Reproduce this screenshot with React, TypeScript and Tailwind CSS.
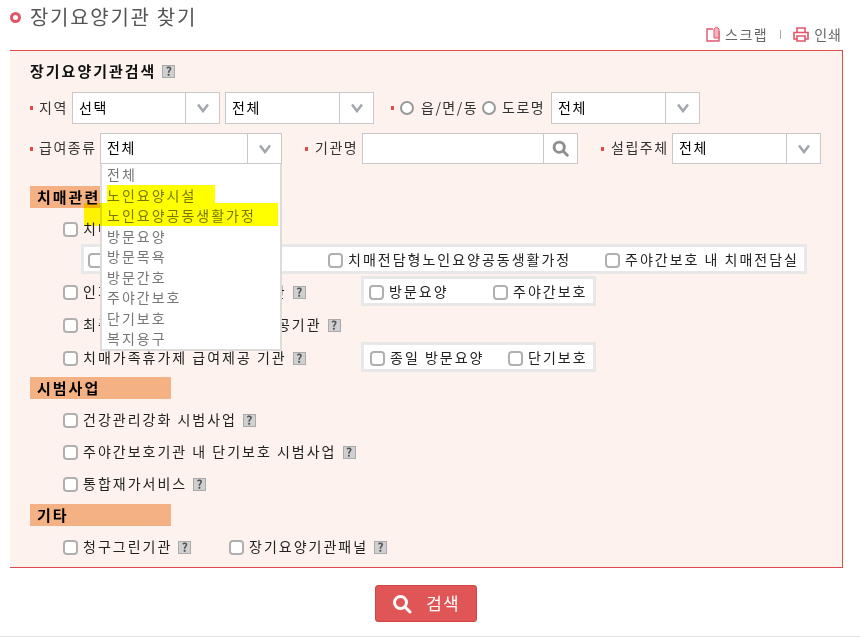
const font = { fontFamily: '"Noto Sans CJK KR", "Liberation Sans", sans-serif' };

function Help() {
  return (
    <span className="inline-flex items-center justify-center w-[13px] h-[13px] ml-[6px] shrink-0 bg-[#d0d0d0] border border-[#aaa] text-[#555] text-[12px] font-bold leading-none tracking-normal">
      ?
    </span>
  );
}

function Chevron() {
  return (
    <svg width="12" height="10" viewBox="0 0 12 10">
      <path d="M1 1.5 L6 8 L11 1.5" fill="none" stroke="#a3a6ad" strokeWidth="2.6" />
    </svg>
  );
}

function SearchIcon({ color, size, width }: { color: string; size: number; width: number }) {
  return (
    <svg width={size} height={size} viewBox="0 0 20 20">
      <circle cx="8.5" cy="8.5" r="6" fill="none" stroke={color} strokeWidth={width} />
      <path d="M13 13 L18 18" stroke={color} strokeWidth={width} strokeLinecap="round" />
    </svg>
  );
}

function Select({ w, h = "h-[32px]", label = "전체", btn = "w-[34px]" }: { w: string; h?: string; label?: string; btn?: string }) {
  return (
    <div className={`flex items-center shrink-0 bg-white border border-[#c8c8c8] ${w} ${h}`}>
      <span className="flex-1 pl-[6px] pb-[2px] text-[14px] text-black">{label}</span>
      <span className={`flex items-center justify-center h-full border-l border-[#c8c8c8] ${btn}`}>
        <Chevron />
      </span>
    </div>
  );
}

function Dot() {
  return <span className="inline-block w-[3px] h-[4px] bg-[#e04a4a] mr-[6px] shrink-0" />;
}

function Check({ label, help, className = "" }: { label: string; help?: boolean; className?: string }) {
  return (
    <label className={`flex items-center mt-[2px] whitespace-nowrap text-[14px] text-[#222] ${className}`}>
      <input
        type="checkbox"
        className="appearance-none w-[15px] h-[15px] mr-[5px] shrink-0 bg-white border-2 border-[#b0b0b0] rounded-[4px]"
      />
      <span className="pb-[2px]">{label}</span>
      {help && <Help />}
    </label>
  );
}

function Section({ title, className = "" }: { title: string; className?: string }) {
  return (
    <div className={`flex items-center w-[141px] h-[22px] pl-[7px] bg-[#f4b183] text-[15px] font-bold tracking-[2px] text-black ${className}`}>
      {title}
    </div>
  );
}

function SubBox({ children, className }: { children: React.ReactNode; className: string }) {
  return <div className={`flex items-center bg-white border-[3px] border-[#e8e8e8] ${className}`}>{children}</div>;
}

const serviceOptions = ["방문요양", "방문목욕", "방문간호", "주야간보호", "단기보호", "복지용구"];

export default function App() {
  return (
    <div className="w-[860px] h-[637px] overflow-hidden bg-white tracking-[2px]" style={font}>
      <div className="flex items-start justify-between h-[50px] pl-[10px] pr-[18px]">
        <div className="flex items-center mt-[3px]">
          <span className="w-[11px] h-[11px] rounded-full border-[3px] border-[#e2566a] bg-white" />
          <h1 className="ml-[9px] text-[20px] leading-[28px] tracking-[1.7px] text-[#555]">장기요양기관 찾기</h1>
        </div>
        <div className="flex items-center mt-[24px] text-[14px] leading-[20px] text-[#666] tracking-[1.5px]">
          <svg width="15" height="16" viewBox="0 0 15 16" className="mr-[4px]">
            <path d="M7 3 H1 V15 H13 V5" fill="none" stroke="#e2566a" strokeWidth="1.4" />
            <path d="M8 12 V3 Q10.5 -0.5 13 3 V12 Z" fill="#f3b4bd" stroke="#e2566a" />
          </svg>
          <span>스크랩</span>
          <span className="mx-[12px] w-px h-[9px] bg-[#aaa]" />
          <svg width="16" height="15" viewBox="0 0 16 15" className="mr-[5px]">
            <path d="M4 5 V1 H12 V5 M4 12 H1 V5.5 H15 V12 H12" fill="none" stroke="#e2566a" strokeWidth="1.6" />
            <path d="M4 9 H12 V14 H4 Z" fill="none" stroke="#e2566a" strokeWidth="1.6" />
          </svg>
          <span className="tracking-[1px]">인쇄</span>
        </div>
      </div>

      <div className="relative w-[833px] h-[518px] ml-[10px] px-[20px] bg-[#fdf2ee] border-t border-b border-r border-[#e04a4a]">
        <div className="flex items-center h-[20px] mt-[10px] text-[15px] font-bold tracking-[2px] text-[#111]">
          장기요양기관검색
          <Help />
        </div>

        <div className="flex items-center mt-[11px] text-[14px] text-[#333] tracking-[1.5px] whitespace-nowrap">
          <Dot />
          <span className="w-[33px] pb-[2px]">지역</span>
          <Select w="w-[148px]" label="선택" />
          <div className="w-[5px]" />
          <Select w="w-[149px]" />
          <div className="w-[17px]" />
          <Dot />
          <span className="w-[14px] h-[14px] rounded-full bg-white border-2 border-[#999]" />
          <span className="ml-[7px] w-[55px] pb-[2px]">읍/면/동</span>
          <span className="ml-[6px] w-[14px] h-[14px] rounded-full bg-white border-2 border-[#999]" />
          <span className="ml-[6px] w-[42px] pb-[2px]">도로명</span>
          <div className="w-[7px]" />
          <Select w="w-[149px]" />
        </div>

        <div className="flex items-center mt-[9px] text-[14px] text-[#333] tracking-[1.5px] whitespace-nowrap">
          <Dot />
          <span className="w-[61px] pb-[2px]">급여종류</span>
          <Select w="w-[182px]" h="h-[31px]" />
          <div className="w-[23px]" />
          <Dot />
          <span className="w-[48px] pl-[1px] pb-[2px]">기관명</span>
          <div className="flex items-center justify-end w-[216px] h-[31px] bg-white border border-[#c8c8c8]">
            <span className="flex items-center justify-center w-[34px] h-full border-l border-[#c8c8c8]">
              <SearchIcon color="#8f8f8f" size={17} width={3.4} />
            </span>
          </div>
          <div className="w-[23px]" />
          <Dot />
          <span className="w-[62px] pl-[1px] pb-[2px]">설립주체</span>
          <Select w="w-[149px]" h="h-[31px]" />
        </div>

        <Section title="치매관련" className="mt-[22px]" />
        <div className="flex items-center h-[32px] mt-[4px] pl-[33px]">
          <Check label="치매전담형 장기요양기관" />
        </div>
        <SubBox className="w-[726px] h-[30px] ml-[51px] pl-[4px]">
          <Check label="치매전담형노인요양시설" className="w-[240px]" />
          <Check label="치매전담형노인요양공동생활가정" className="w-[277px]" />
          <Check label="주야간보호 내 치매전담실" />
        </SubBox>
        <div className="flex items-center h-[30px] mt-[2px] pl-[33px]">
          <Check label="인지활동형 프로그램 제공기관" help className="w-[298px]" />
          <SubBox className="w-[235px] h-[30px] pl-[5px]">
            <Check label="방문요양" className="w-[124px]" />
            <Check label="주야간보호" />
          </SubBox>
        </div>
        <div className="flex items-center h-[32px] mt-[2px] pl-[33px]">
          <Check label="최중증 수급자 프로그램형 제공기관" help />
        </div>
        <div className="flex items-center h-[30px] mt-[2px] pl-[33px]">
          <Check label="치매가족휴가제 급여제공 기관" help className="w-[298px]" />
          <SubBox className="w-[235px] h-[30px] pl-[6px]">
            <Check label="종일 방문요양" className="w-[138px]" />
            <Check label="단기보호" />
          </SubBox>
        </div>

        <Section title="시범사업" className="mt-[5px]" />
        <div className="flex items-center h-[32px] mt-[4px] pl-[33px]">
          <Check label="건강관리강화 시범사업" help />
        </div>
        <div className="flex items-center h-[32px] pl-[33px]">
          <Check label="주야간보호기관 내 단기보호 시범사업" help />
        </div>
        <div className="flex items-center h-[32px] pl-[33px]">
          <Check label="통합재가서비스" help />
        </div>

        <Section title="기타" className="mt-[5px]" />
        <div className="flex items-center h-[32px] mt-[4px] pl-[33px]">
          <Check label="청구그린기관" help className="w-[166px]" />
          <Check label="장기요양기관패널" help />
        </div>

        {/* open select list */}
        <div className="absolute left-[90px] top-[113px] w-[182px] h-[187px] bg-white border-2 border-t-0 border-[#dcdcdc] text-[14px] leading-[20.5px] text-[#777]">
          <div className="pl-[5px]">전체</div>
          <div className="pl-[5px]">노인요양시설</div>
          <div className="pl-[5px]">노인요양공동생활가정</div>
          {serviceOptions.map((o) => (
            <div key={o} className="pl-[5px]">
              {o}
            </div>
          ))}
          {/* marker pen strokes over the list */}
          <span className="absolute left-[5px] top-[21px] w-[108px] h-[21px] bg-[#ffff00] mix-blend-multiply" />
          <span className="absolute left-[-18px] top-[39px] w-[194px] h-[23px] bg-[#ffff00] mix-blend-multiply" />
        </div>
      </div>

      <div className="flex justify-center pt-[17px] pr-[8px] h-[69px] border-b border-[#e4e4e4]">
        <button className="flex items-center justify-center gap-[14px] w-[102px] h-[37px] rounded-[3px] bg-[#e05555] border border-[#d24444] text-white text-[17px] tracking-[1px]">
          <SearchIcon color="#fff" size={20} width={3} />
          <span className="pb-[2px]">검색</span>
        </button>
      </div>
    </div>
  );
}
